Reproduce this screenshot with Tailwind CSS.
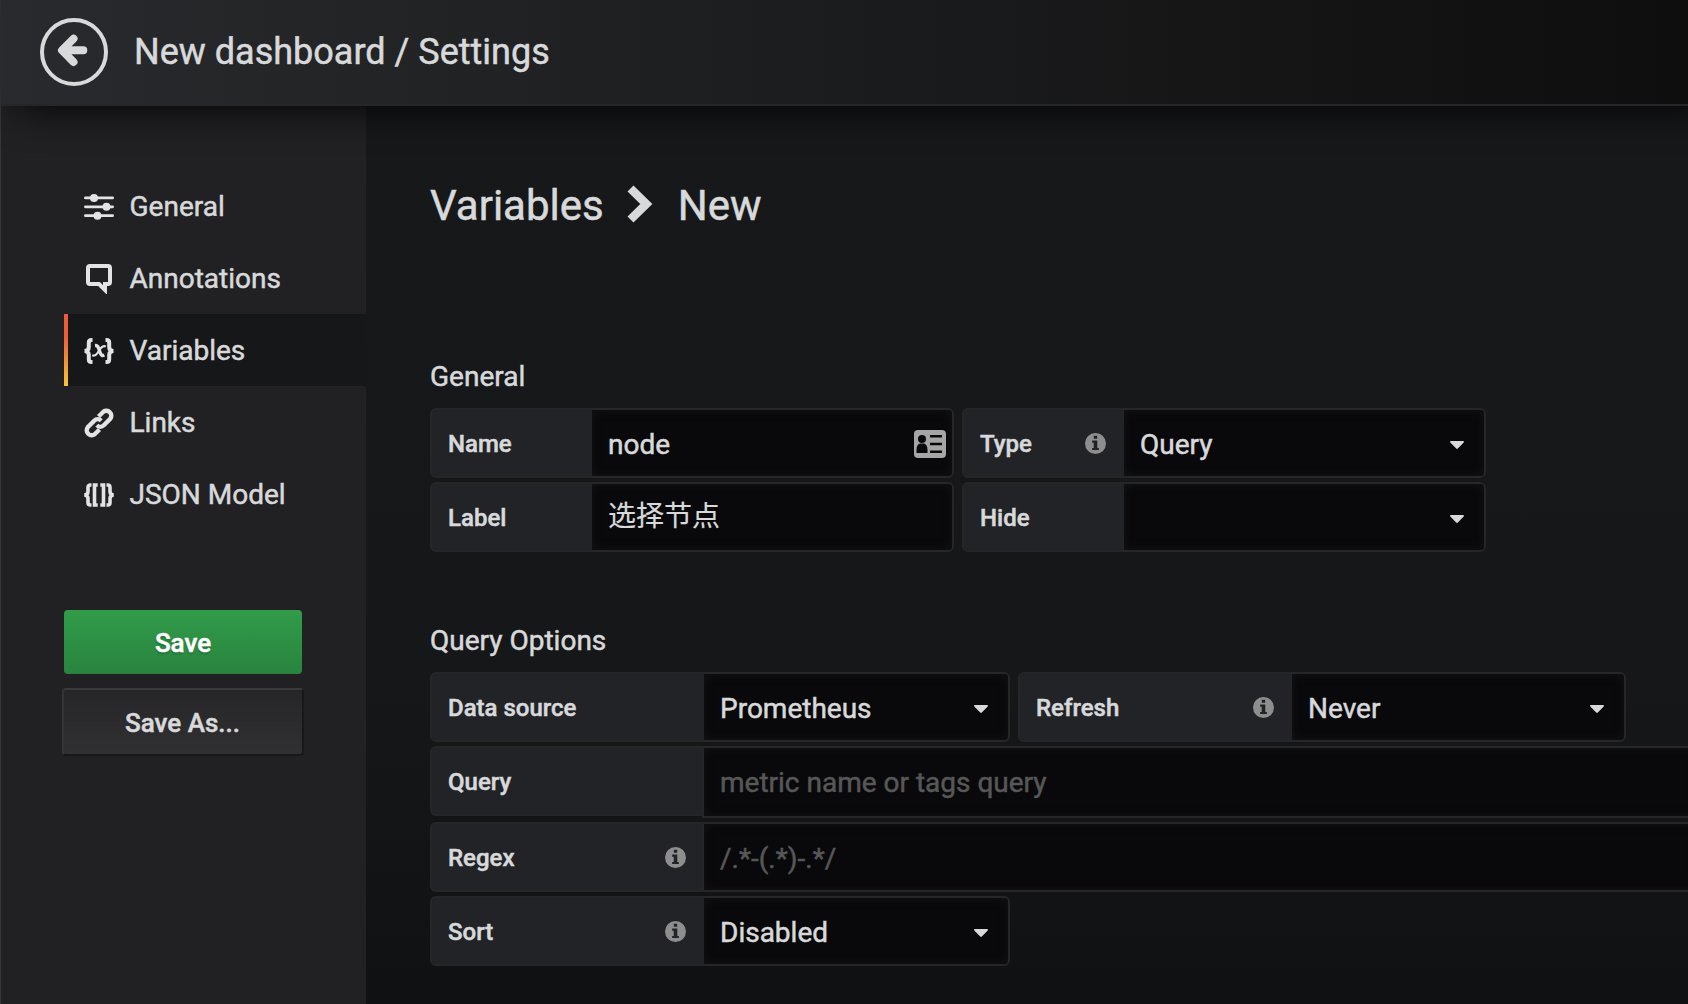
<!DOCTYPE html>
<html lang="en">
<head>
<meta charset="utf-8">
<title>New dashboard / Settings</title>
<script src="https://cdn.jsdelivr.net/npm/@tailwindcss/browser@4"></script>
</head>
<body class="h-[1004px] w-[1688px] overflow-hidden bg-[#161719] text-[28px] leading-[42px] text-[#d8d9da] font-[Roboto,'Noto_Sans_CJK_SC',sans-serif] [-webkit-text-stroke:0.5px_currentColor]">
<svg class="hidden">
  <symbol id="info" viewBox="0 0 20 20"><path fill="#8e8e8e" fill-rule="evenodd" d="M10 0a10 10 0 1 1 0 20a10 10 0 0 1 0-20ZM8.400 2.500v3h3.200v-3ZM6.800 7.200v2h1.500v5H6.800v2h6.400v-2h-1.500v-7Z"/></symbol>
  <symbol id="caret" viewBox="0 0 14 8"><path fill="#d8d9da" d="M.9 0h12.200c.8 0 1.100.8.6 1.400L7.800 7.500a1.100 1.100 0 0 1-1.600 0L.3 1.400C-.2.8.1 0 .9 0Z"/></symbol>
</svg>
<div class="flex h-full flex-col border-l border-[#363638]">
  <header class="relative z-10 flex h-[106px] shrink-0 items-center border-b-2 border-[#262628] bg-[linear-gradient(90deg,#292a2d,#0e0e0e)] pl-[39px] shadow-[16px_0_40px_black]">
    <svg class="size-[68px]" viewBox="0 0 68 68" fill="none" stroke="#d8d9da"><circle cx="34" cy="34" r="32" stroke-width="4"/><path d="M33.500 20.700 22 32.300 33.500 44M23 32.300H43.300" stroke-width="8" stroke-linecap="round" stroke-linejoin="round"/></svg>
    <h1 class="ml-[26px] text-[36px] leading-[54px]">New dashboard / Settings</h1>
  </header>
  <div class="flex min-h-0 flex-1">
    <aside class="w-[365px] shrink-0 bg-[#212124] pt-16 pl-[63px]">
      <nav>
        <a class="flex h-[72px] items-center gap-4 pt-0.5 pl-[19.5px]">
          <svg class="size-[30px]" viewBox="0 0 30 30" fill="#e3e3e3"><rect y="4.500" width="30" height="2.800" rx="1.400"/><rect y="13.400" width="30" height="2.800" rx="1.400"/><rect y="22.300" width="30" height="2.800" rx="1.400"/><circle cx="10" cy="5.900" r="4"/><circle cx="22.500" cy="14.800" r="4"/><circle cx="13.500" cy="23.700" r="4"/></svg>General</a>
        <a class="flex h-[72px] items-center gap-4 pt-0.5 pl-[19.5px]">
          <svg class="size-[30px]" viewBox="0 0 30 30" fill="none" stroke="#e3e3e3" stroke-width="4"><path d="M6 2h18q2 0 2 2v14q0 2-2 2h-3v6l-6-6H6q-2 0-2-2V4q0-2 2-2Z"/></svg>Annotations</a>
        <a class="flex h-[72px] items-center bg-[#161719]">
          <span class="h-full w-1 bg-[linear-gradient(#ec5c37_30%,#f8c537)]"></span>
          <svg class="mr-4 ml-[15.5px] size-[30px] translate-y-px" viewBox="0 0 30 30" fill="none" stroke="#e3e3e3" stroke-width="4"><path d="M8.500 4H7.500Q4.800 4 4.800 6.500v4.500Q4.800 15 .5 15q4.300 0 4.300 4v4.500q0 2.500 2.700 2.500h1M21.500 4h1q2.700 0 2.700 2.500v4.500q0 4 4.300 4q-4.300 0-4.300 4v4.500q0 2.500-2.700 2.500h-1"/><path stroke-width="3.400" d="M11 9.500q2.500-.3 3.500 2.500l2 5.500q1 3 3.800 1.500"/><path stroke-width="2.200" d="M21.800 10.500q-2.800-1.500-5.300 2l-3 4.700q-2.500 3.300-5.300 2"/></svg><span class="pt-0.5">Variables</span></a>
        <a class="flex h-[72px] items-center gap-4 pt-0.5 pl-[19.5px]">
          <svg class="size-[30px]" viewBox="0 0 30 30" fill="none" stroke="#e3e3e3" stroke-width="4.400"><path d="M14.500 8.500l4.800-4.700a5 5 0 0 1 7 7l-6.500 6.500a5 5 0 0 1-7 0"/><path d="M15.500 21.500l-4.800 4.700a5 5 0 0 1-7-7l6.500-6.500a5 5 0 0 1 7 0"/></svg>Links</a>
        <a class="flex h-[72px] items-center gap-4 pt-0.5 pl-[19.5px]">
          <svg class="size-[30px]" viewBox="0 0 30 30" fill="none" stroke="#e3e3e3" stroke-width="3.600"><path d="M7.500 5H6.300Q4 5 4 7.500v4Q4 15 .2 15q3.800 0 3.800 3.500v4Q4 25 6.300 25h1.200M22.500 5h1.200Q26 5 26 7.500v4q0 3.500 3.800 3.500q-3.800 0-3.800 3.500v4q0 2.500-2.300 2.500h-1.200M13.700 5H10.500v20h3.200M16.300 5h3.200v20h-3.200"/></svg>JSON Model</a>
      </nav>
      <div class="-ml-0.5 flex w-[242px] flex-col pt-20 text-[26px] font-medium">
        <button class="mx-0.5 h-16 rounded bg-[linear-gradient(#319c4a,#29833f)] pt-0.5 text-white [text-shadow:0_2px_2px_rgb(0_0_0/.2)]">Save</button>
        <button class="mt-3.5 h-[68px] rounded border-2 border-t-[#3a3a3c] border-r-[#18181a] border-b-[#18181a] border-l-[#343436] bg-[linear-gradient(#262628,#303032)] pt-0.5 pr-px">Save As...</button>
      </div>
    </aside>
    <main class="min-w-0 flex-1 bg-[linear-gradient(#17181a,#161719_65%,#101113)] pl-16">
      <h2 class="flex items-center pt-[68px] text-[42px] leading-[63px]">Variables
        <svg class="mr-[25px] ml-[23px] h-[38px] w-[26px] -translate-y-0.5" viewBox="0 0 26 38" fill="none" stroke="#d8d9da" stroke-width="8.500"><path d="M3.500 3.500 19.300 19 3.500 34.500"/></svg>New</h2>
      <h5 class="mt-[119px] leading-[42px]">General</h5>
      <div class="mt-2.5 flex flex-col gap-1">
        <div class="flex gap-2">
          <div class="flex h-[70px] w-[524px] overflow-hidden rounded-md border-2 border-[#262628]">
            <label class="flex w-40 items-center bg-[#222327] pt-0.5 pl-4 text-2xl font-medium">Name</label>
            <div class="flex flex-1 items-center justify-between bg-[#09090b] pt-[3px] pr-1.5 pl-4 shadow-[inset_0_0_10px_#151517]">node
              <svg class="mb-px h-7 w-8" viewBox="0 0 32 28"><rect width="32" height="28" rx="4" fill="#a5a5a5"/><circle cx="8" cy="9" r="4" fill="#09090b"/><path fill="#09090b" d="M2.500 23v-3q0-6 4-6.500h3q4 .5 4 6.500v3ZM16 5h12v2.500H16zM16 12.700h12v2.500H16zM16 20.500h12v2.500H16z"/></svg></div>
          </div>
          <div class="flex h-[70px] w-[524px] overflow-hidden rounded-md border-2 border-[#262628]">
            <label class="flex w-40 items-center justify-between bg-[#222327] pt-0.5 pr-[18px] pl-4 text-2xl font-medium">Type<svg class="mb-px size-[21px]"><use href="#info"/></svg></label>
            <div class="flex flex-1 items-center justify-between bg-[#09090b] pt-[3px] pr-5 pl-4 shadow-[inset_0_0_10px_#151517]">Query<svg class="h-2 w-3.5"><use href="#caret"/></svg></div>
          </div>
        </div>
        <div class="flex gap-2">
          <div class="flex h-[70px] w-[524px] overflow-hidden rounded-md border-2 border-[#262628]">
            <label class="flex w-40 items-center bg-[#222327] pt-0.5 pl-4 text-2xl font-medium">Label</label>
            <div class="flex flex-1 items-center bg-[#09090b] pl-4 shadow-[inset_0_0_10px_#151517] [-webkit-text-stroke:0.2px_currentColor]">选择节点</div>
          </div>
          <div class="flex h-[70px] w-[524px] overflow-hidden rounded-md border-2 border-[#262628]">
            <label class="flex w-40 items-center bg-[#222327] pt-0.5 pl-4 text-2xl font-medium">Hide</label>
            <div class="flex flex-1 items-center justify-end bg-[#09090b] pt-[3px] pr-5 shadow-[inset_0_0_10px_#151517]"><svg class="h-2 w-3.5"><use href="#caret"/></svg></div>
          </div>
        </div>
      </div>
      <h5 class="mt-[68px] leading-[42px]">Query Options</h5>
      <div class="mt-2.5 flex flex-col gap-1">
        <div class="flex gap-2">
          <div class="flex h-[70px] w-[580px] overflow-hidden rounded-md border-2 border-[#262628]">
            <label class="flex w-[272px] items-center bg-[#222327] pt-0.5 pl-4 text-2xl font-medium">Data source</label>
            <div class="flex flex-1 items-center justify-between bg-[#09090b] pt-[3px] pr-5 pl-4 shadow-[inset_0_0_10px_#151517]">Prometheus<svg class="h-2 w-3.5"><use href="#caret"/></svg></div>
          </div>
          <div class="flex h-[70px] w-[608px] overflow-hidden rounded-md border-2 border-[#262628]">
            <label class="flex w-[272px] items-center justify-between bg-[#222327] pt-0.5 pr-[18px] pl-4 text-2xl font-medium">Refresh<svg class="mb-px size-[21px]"><use href="#info"/></svg></label>
            <div class="flex flex-1 items-center justify-between bg-[#09090b] pt-[3px] pr-5 pl-4 shadow-[inset_0_0_10px_#151517]">Never<svg class="h-2 w-3.5"><use href="#caret"/></svg></div>
          </div>
        </div>
        <div class="flex h-[72px]">
          <label class="flex h-[70px] w-[272px] items-center rounded-l-md border-2 border-r-0 border-[#262628] bg-[#222327] pt-0.5 pl-4 text-2xl font-medium">Query</label>
          <div class="-mr-3 flex flex-1 items-center border-2 border-[#262628] bg-[#09090b] pt-0.5 pl-4 text-[#575757] shadow-[inset_0_0_10px_#151517]">metric name or tags query</div>
        </div>
        <div class="flex h-[70px]">
          <label class="flex w-[272px] items-center justify-between rounded-l-md border-2 border-r-0 border-[#262628] bg-[#222327] pt-0.5 pr-4 pl-4 text-2xl font-medium">Regex<svg class="mb-px size-[21px]"><use href="#info"/></svg></label>
          <div class="-mr-3 flex flex-1 items-center border-2 border-[#262628] bg-[#09090b] pt-[3px] pl-4 text-[#575757] shadow-[inset_0_0_10px_#151517]">/.*-(.*)-.*/</div>
        </div>
        <div class="flex h-[70px] w-[580px] overflow-hidden rounded-md border-2 border-[#262628]">
          <label class="flex w-[272px] items-center justify-between bg-[#222327] pt-0.5 pr-[18px] pl-4 text-2xl font-medium">Sort<svg class="mb-px size-[21px]"><use href="#info"/></svg></label>
          <div class="flex flex-1 items-center justify-between bg-[#09090b] pt-[3px] pr-5 pl-4 shadow-[inset_0_0_10px_#151517]">Disabled<svg class="h-2 w-3.5"><use href="#caret"/></svg></div>
        </div>
      </div>
    </main>
  </div>
</div>
</body>
</html>
